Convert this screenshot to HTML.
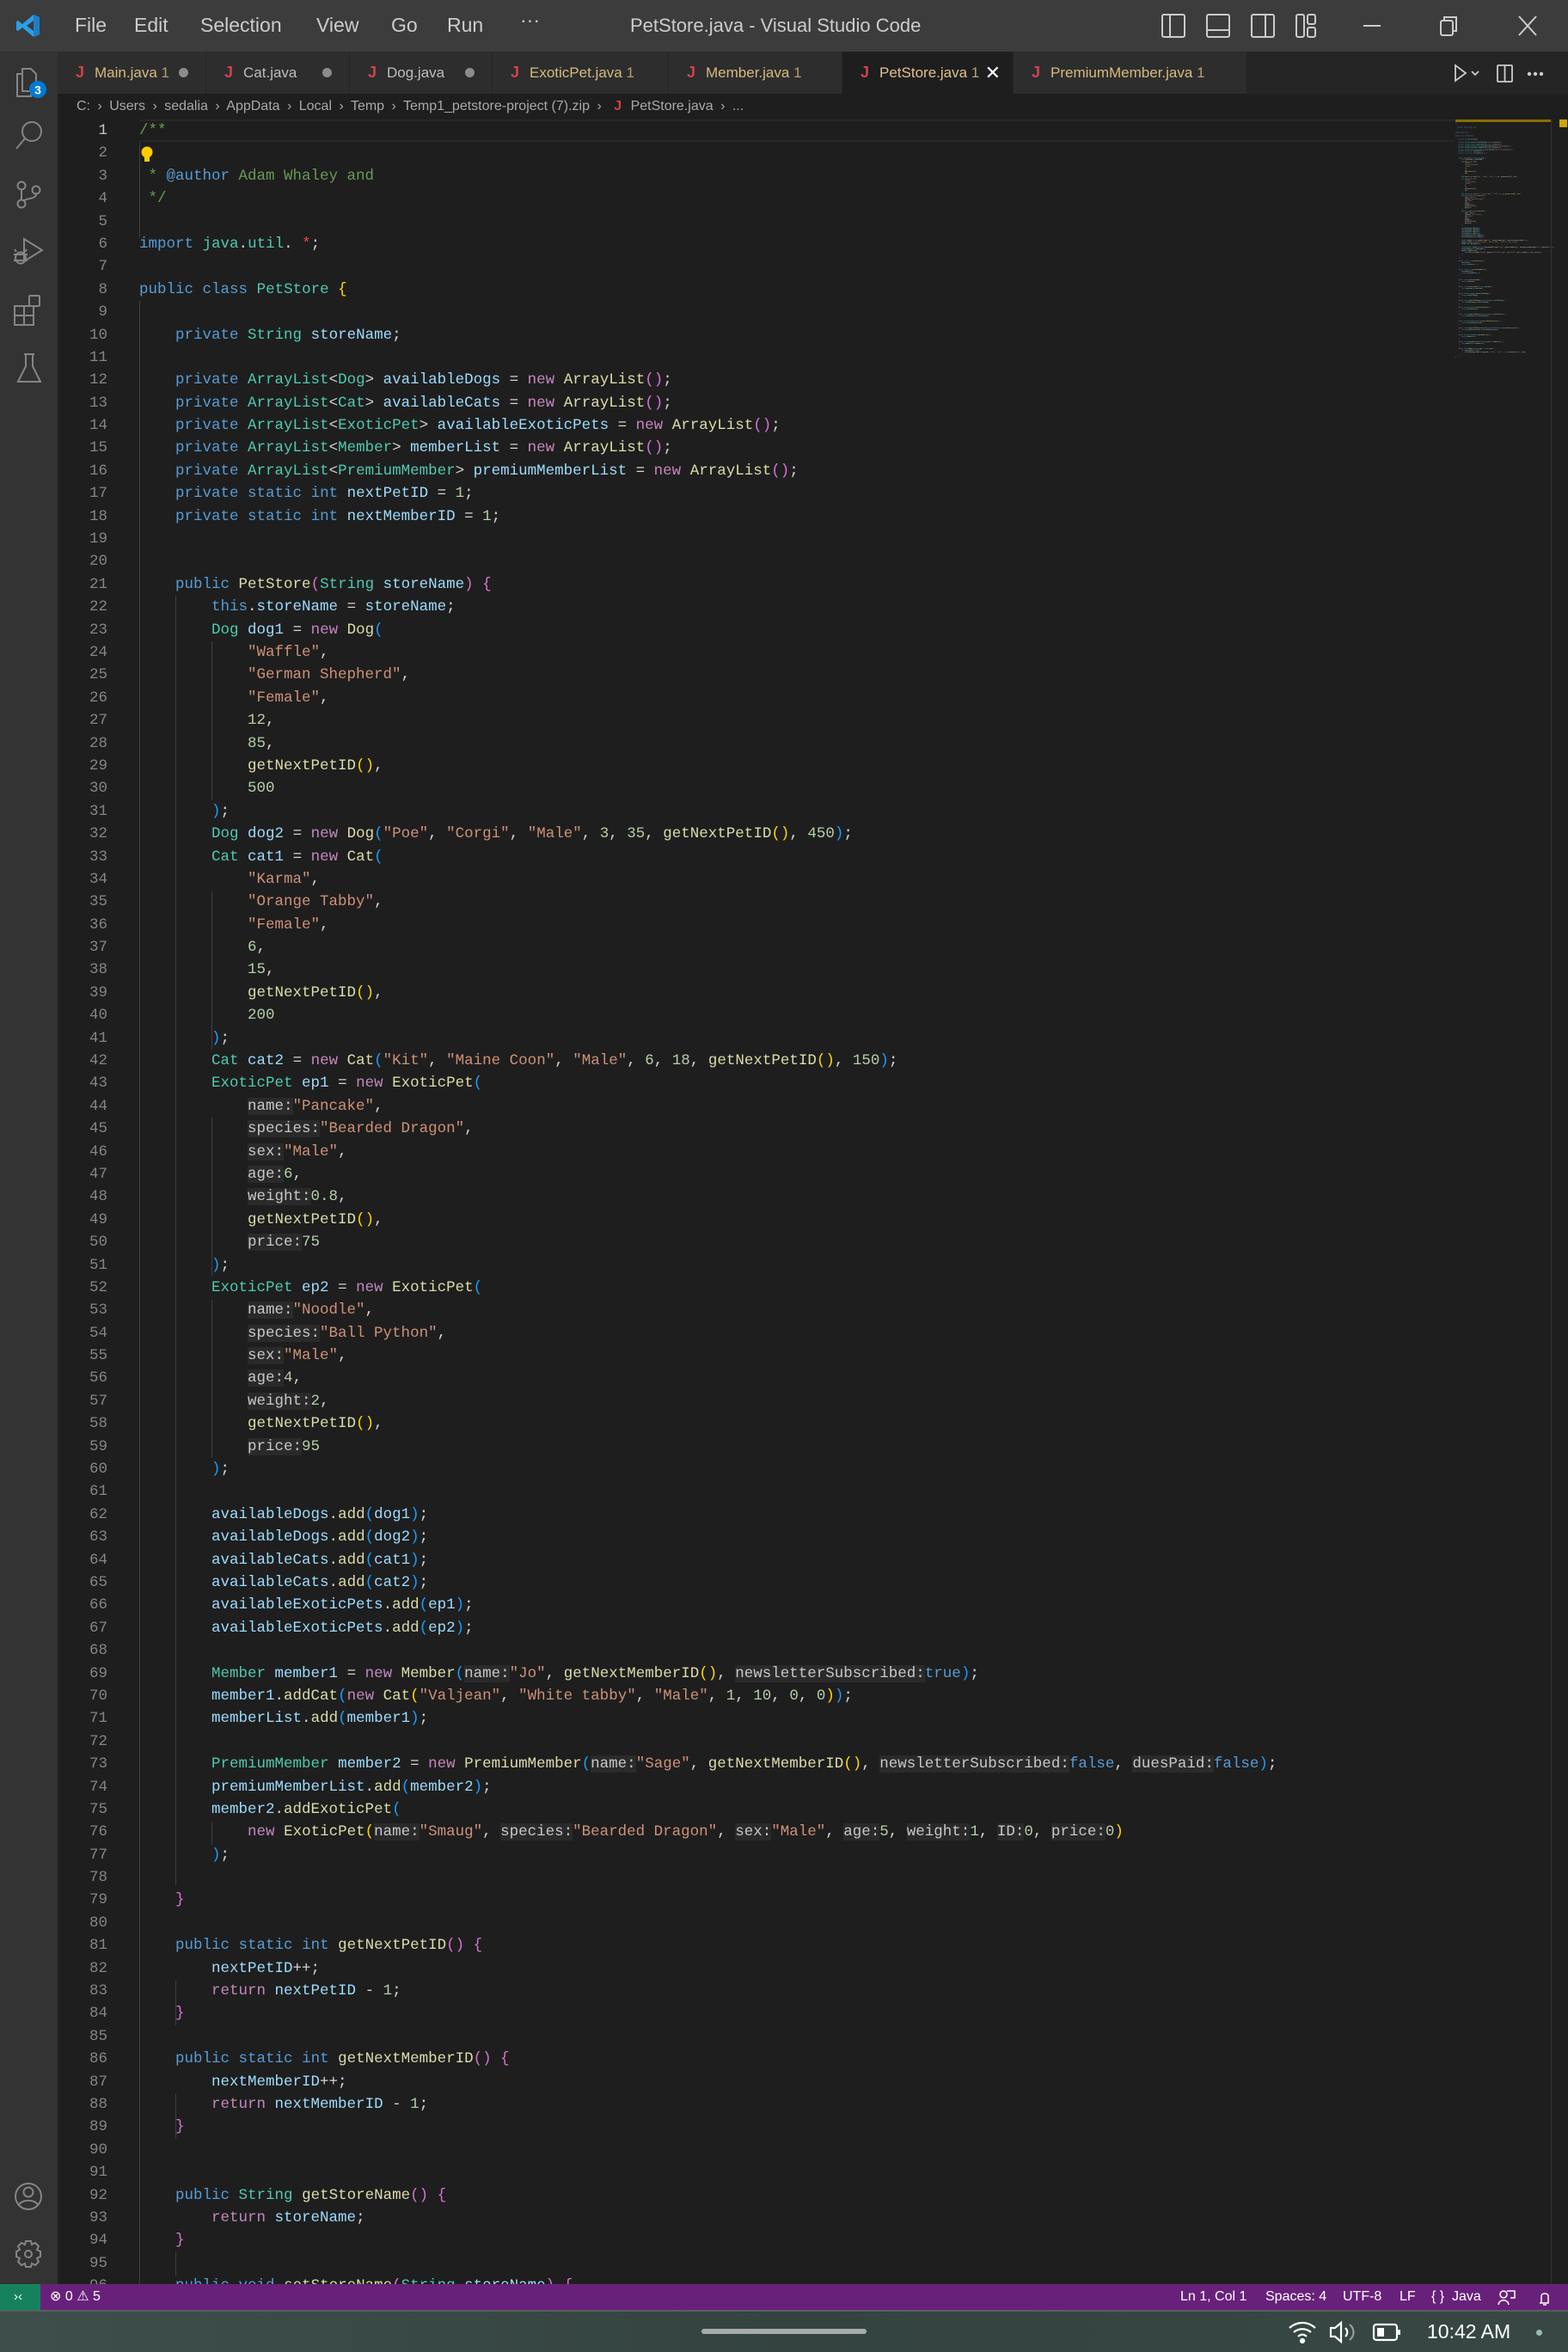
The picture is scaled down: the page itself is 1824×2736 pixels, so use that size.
<!DOCTYPE html>
<html><head><meta charset="utf-8"><style>
*{margin:0;padding:0;box-sizing:border-box}
body{width:1824px;height:2736px;background:#1e1e1e;overflow:hidden;position:relative;font-family:"Liberation Sans",sans-serif}
.abs{position:absolute}
#title{left:0;top:0;width:1824px;height:60px;background:#3c3c3c;color:#cccccc}
#title .m{position:absolute;top:16px;font-size:23px;color:#cccccc}
#tabs{left:67px;top:60px;width:1757px;height:49px;background:#252526}
.tab{position:absolute;top:0;height:49px;background:#2d2d2d;border-right:1px solid #252526;font-size:17px;line-height:49px;color:#d7ba7d;white-space:nowrap}
.tab .j{color:#d2414c;font-weight:bold;margin:0 12px 0 21px;font-size:18px}
.tab .dot{position:absolute;right:20px;top:19px;width:11px;height:11px;border-radius:50%;background:#8c8c8c}
#act{left:0;top:60px;width:67px;height:2597px;background:#333333}
#bc{left:67px;top:109px;width:1757px;height:30px;background:#1e1e1e;font-size:16px;color:#a9a9a9;line-height:30px;padding-left:22px;white-space:nowrap}
#ed{left:67px;top:139px;width:1757px;height:2518px;overflow:hidden;background:#1e1e1e}
#ln{position:absolute;left:0;top:0;width:58px;font-family:"Liberation Mono",monospace;font-size:17.5px;color:#858585;text-align:right}
#ln div,#code div{height:26.4px;line-height:26.4px}
#code{position:absolute;left:95px;top:0;font-family:"Liberation Mono",monospace;font-size:17.5px;color:#d4d4d4;white-space:normal}
#code div,#mm div{white-space:pre}
.c{color:#6a9955}.k{color:#569cd6}.p{color:#c586c0}.t{color:#4ec9b0}.v{color:#9cdcfe}.f{color:#dcdcaa}.s{color:#ce9178}.n{color:#b5cea8}
.y{color:#ffd700}.o{color:#da70d6}.b{color:#179fff}.r{color:#f44747}
.h{background:#2a2a2a;color:#c8c8c8}
.g{position:absolute;width:1px;background:#404040}
#mm{position:absolute;left:1626px;top:4px;transform-origin:0 0;transform:scale(0.087,0.0757);font-family:"Liberation Mono",monospace;font-size:17.5px;color:#d4d4d4;white-space:normal}
#mm div{height:26.4px;line-height:26.4px}
#status{left:0;top:2657px;width:1824px;height:30px;background:#68217a;color:#fff;font-size:16px;line-height:30px}
#status span{position:absolute;top:0}
#task{left:0;top:2687px;width:1824px;height:49px;background:linear-gradient(90deg,#3e4f4b,#34433f 50%,#384744);border-top:2px solid #5a5e5c}
</style></head><body>

<div id="title" class="abs">
<svg class="abs" style="left:18px;top:15px" width="30" height="30" viewBox="0 0 30 30"><path d="M21 2 L28 5 V25 L21 28 L8 17 L3 21 L1 20 V10 L3 9 L8 13 Z M21 9 L13 15 L21 21 Z" fill="#2b9fe8"/><path d="M21 2 L28 5 V25 L21 28 Z" fill="#1f7fc7"/></svg>
<span class="m" style="left:87px">File</span><span class="m" style="left:156px">Edit</span><span class="m" style="left:233px">Selection</span><span class="m" style="left:368px">View</span><span class="m" style="left:455px">Go</span><span class="m" style="left:520px">Run</span><span class="m" style="left:605px;top:10px">···</span>
<span class="abs" style="left:733px;top:17px;font-size:22px;color:#cccccc">PetStore.java - Visual Studio Code</span>
<svg class="abs" style="left:1350px;top:14px" width="440" height="32" fill="none" stroke="#cccccc" stroke-width="2">
<rect x="2" y="3" width="26" height="26" rx="2"/><line x1="11" y1="3" x2="11" y2="29"/>
<rect x="54" y="3" width="26" height="26" rx="2"/><line x1="54" y1="21" x2="80" y2="21"/>
<rect x="106" y="3" width="26" height="26" rx="2"/><line x1="122" y1="3" x2="122" y2="29"/>
<rect x="158" y="3" width="9" height="26" rx="2"/><rect x="171" y="3" width="9" height="11" rx="2"/><rect x="171" y="18" width="9" height="11" rx="2"/>
<line x1="236" y1="16" x2="256" y2="16"/>
<rect x="326" y="10" width="14" height="17" rx="2"/><path d="M330 10 V6 H344 V22 H340"/>
<path d="M417 5 L437 27 M437 5 L417 27"/>
</svg>
</div>

<div id="tabs" class="abs">
<div class="tab" style="left:0;width:173px"><span class="j">J</span>Main.java <span style="opacity:.8">1</span><span class="dot"></span></div>
<div class="tab" style="left:173px;width:167px;color:#bdbdbd"><span class="j">J</span>Cat.java<span class="dot"></span></div>
<div class="tab" style="left:340px;width:166px;color:#bdbdbd"><span class="j">J</span>Dog.java<span class="dot"></span></div>
<div class="tab" style="left:506px;width:205px"><span class="j">J</span>ExoticPet.java <span style="opacity:.8">1</span></div>
<div class="tab" style="left:711px;width:202px"><span class="j">J</span>Member.java <span style="opacity:.8">1</span></div>
<div class="tab" style="left:913px;width:199px;background:#1e1e1e;color:#e2c08d"><span class="j">J</span>PetStore.java <span style="opacity:.8">1</span><span style="position:absolute;right:14px;color:#fff;font-size:22px">✕</span></div>
<div class="tab" style="left:1112px;width:272px"><span class="j">J</span>PremiumMember.java <span style="opacity:.8">1</span></div>
<svg class="abs" style="left:1620px;top:12px" width="130" height="26" fill="none" stroke="#cccccc" stroke-width="1.8"><path d="M6 4 L18 13 L6 22 Z"/><path d="M25 11 L29 15 L33 11"/><rect x="55" y="4" width="17" height="19" rx="1"/><line x1="63.5" y1="4" x2="63.5" y2="23"/><circle cx="92" cy="14" r="1.3" fill="#ccc"/><circle cx="99" cy="14" r="1.3" fill="#ccc"/><circle cx="106" cy="14" r="1.3" fill="#ccc"/></svg>
</div>

<div id="act" class="abs">
<svg width="67" height="420" fill="none" stroke="#858585" stroke-width="2">
<path d="M26 20 H36 L42 26 V46 H26 Z"/><path d="M26 26 H20 V52 H36 V46"/>
<circle cx="44" cy="44" r="10" fill="#0078d4" stroke="none"/><text x="44" y="49.5" font-size="14" font-weight="bold" fill="#fff" stroke="none" text-anchor="middle" font-family="Liberation Sans">3</text>
<circle cx="37" cy="93" r="11"/><path d="M29 101 L19 113"/>
<circle cx="25" cy="156" r="4.5"/><circle cx="25" cy="177" r="4.5"/><circle cx="42" cy="161" r="4.5"/><path d="M25 160 V172 M42 166 C42 172 30 170 27 174"/>
<path d="M28 218 L49 231 L28 244 Z"/><ellipse cx="24" cy="240" rx="6" ry="6.5"/><path d="M16 236 H32 M16 243 H32 M19 233 L17 230 M29 233 L31 230"/>
<rect x="17" y="296" width="11" height="11"/><rect x="28" y="296" width="11" height="11"/><rect x="17" y="307" width="11" height="11"/><rect x="28" y="307" width="11" height="11"/><rect x="34" y="284" width="12" height="12" rx="1"/>
<path d="M28 352 H40 M30 352 V366 L21 384 H47 L38 366 V352"/>
</svg>
<svg class="abs" style="left:0;top:2470px" width="67" height="130" fill="none" stroke="#858585" stroke-width="2">
<circle cx="33" cy="25" r="15"/><circle cx="33" cy="20" r="5.5"/><path d="M22 35 C25 28 41 28 44 35"/>
<circle cx="33" cy="92" r="4"/><path d="M30 77 H36 L37 81 L41 79 L45 83 L43 87 L47 89 V95 L43 97 L45 101 L41 105 L37 103 L36 107 H30 L29 103 L25 105 L21 101 L23 97 L19 95 V89 L23 87 L21 83 L25 79 L29 81 Z"/>
</svg>
</div>

<div id="bc" class="abs">C: <span style="margin:0 4px">›</span> Users <span style="margin:0 4px">›</span> sedalia <span style="margin:0 4px">›</span> AppData <span style="margin:0 4px">›</span> Local <span style="margin:0 4px">›</span> Temp <span style="margin:0 4px">›</span> Temp1_petstore-project (7).zip <span style="margin:0 4px">›</span> <span style="color:#d2414c;font-weight:bold;margin:0 6px">J</span> PetStore.java <span style="margin:0 4px">›</span> ...</div>

<div id="ed" class="abs">
<div class="abs" style="left:95px;top:0;width:1530px;height:26.4px;border-top:2px solid #282828;border-bottom:2px solid #282828"></div>
<div class="g" style="left:95px;top:27px;height:110px"></div>
<div class="g" style="left:95px;top:211px;height:2400px"></div>
<div class="g" style="left:137px;top:554px;height:1500px"></div>
<div class="g" style="left:179px;top:607px;height:184px"></div>
<div class="g" style="left:179px;top:898px;height:184px"></div>
<div class="g" style="left:179px;top:1161px;height:184px"></div>
<div class="g" style="left:179px;top:1373px;height:184px"></div>
<div class="g" style="left:179px;top:1980px;height:27px"></div>
<div class="g" style="left:137px;top:2165px;height:52px"></div>
<div class="g" style="left:137px;top:2297px;height:52px"></div>
<div class="g" style="left:137px;top:2481px;height:27px"></div>
<svg class="abs" style="left:96px;top:30px" width="16" height="22"><circle cx="8" cy="8" r="6.5" fill="#ffcc00"/><rect x="5" y="13" width="6" height="6" fill="#ffcc00"/></svg>
<div id="ln"></div>
<div id="code"><div><span class="c">/**</span></div><div> </div><div><span class="c"> * </span><span class="k">@author</span><span class="c"> Adam Whaley and</span></div><div><span class="c"> */</span></div><div> </div><div><span class="k">import</span> <span class="t">java</span>.<span class="t">util</span>. <span class="r">*</span>;</div><div> </div><div><span class="k">public</span> <span class="k">class</span> <span class="t">PetStore</span> <span class="y">{</span></div><div> </div><div>    <span class="k">private</span> <span class="t">String</span> <span class="v">storeName</span>;</div><div> </div><div>    <span class="k">private</span> <span class="t">ArrayList</span>&lt;<span class="t">Dog</span>&gt; <span class="v">availableDogs</span> = <span class="p">new</span> <span class="f">ArrayList</span><span class="o">()</span>;</div><div>    <span class="k">private</span> <span class="t">ArrayList</span>&lt;<span class="t">Cat</span>&gt; <span class="v">availableCats</span> = <span class="p">new</span> <span class="f">ArrayList</span><span class="o">()</span>;</div><div>    <span class="k">private</span> <span class="t">ArrayList</span>&lt;<span class="t">ExoticPet</span>&gt; <span class="v">availableExoticPets</span> = <span class="p">new</span> <span class="f">ArrayList</span><span class="o">()</span>;</div><div>    <span class="k">private</span> <span class="t">ArrayList</span>&lt;<span class="t">Member</span>&gt; <span class="v">memberList</span> = <span class="p">new</span> <span class="f">ArrayList</span><span class="o">()</span>;</div><div>    <span class="k">private</span> <span class="t">ArrayList</span>&lt;<span class="t">PremiumMember</span>&gt; <span class="v">premiumMemberList</span> = <span class="p">new</span> <span class="f">ArrayList</span><span class="o">()</span>;</div><div>    <span class="k">private</span> <span class="k">static</span> <span class="k">int</span> <span class="v">nextPetID</span> = <span class="n">1</span>;</div><div>    <span class="k">private</span> <span class="k">static</span> <span class="k">int</span> <span class="v">nextMemberID</span> = <span class="n">1</span>;</div><div> </div><div> </div><div>    <span class="k">public</span> <span class="f">PetStore</span><span class="o">(</span><span class="t">String</span> <span class="v">storeName</span><span class="o">)</span> <span class="o">{</span></div><div>        <span class="k">this</span>.<span class="v">storeName</span> = <span class="v">storeName</span>;</div><div>        <span class="t">Dog</span> <span class="v">dog1</span> = <span class="p">new</span> <span class="f">Dog</span><span class="b">(</span></div><div>            <span class="s">"Waffle"</span>,</div><div>            <span class="s">"German Shepherd"</span>,</div><div>            <span class="s">"Female"</span>,</div><div>            <span class="n">12</span>,</div><div>            <span class="n">85</span>,</div><div>            <span class="f">getNextPetID</span><span class="y">()</span>,</div><div>            <span class="n">500</span></div><div>        <span class="b">)</span>;</div><div>        <span class="t">Dog</span> <span class="v">dog2</span> = <span class="p">new</span> <span class="f">Dog</span><span class="b">(</span><span class="s">"Poe"</span>, <span class="s">"Corgi"</span>, <span class="s">"Male"</span>, <span class="n">3</span>, <span class="n">35</span>, <span class="f">getNextPetID</span><span class="y">()</span>, <span class="n">450</span><span class="b">)</span>;</div><div>        <span class="t">Cat</span> <span class="v">cat1</span> = <span class="p">new</span> <span class="f">Cat</span><span class="b">(</span></div><div>            <span class="s">"Karma"</span>,</div><div>            <span class="s">"Orange Tabby"</span>,</div><div>            <span class="s">"Female"</span>,</div><div>            <span class="n">6</span>,</div><div>            <span class="n">15</span>,</div><div>            <span class="f">getNextPetID</span><span class="y">()</span>,</div><div>            <span class="n">200</span></div><div>        <span class="b">)</span>;</div><div>        <span class="t">Cat</span> <span class="v">cat2</span> = <span class="p">new</span> <span class="f">Cat</span><span class="b">(</span><span class="s">"Kit"</span>, <span class="s">"Maine Coon"</span>, <span class="s">"Male"</span>, <span class="n">6</span>, <span class="n">18</span>, <span class="f">getNextPetID</span><span class="y">()</span>, <span class="n">150</span><span class="b">)</span>;</div><div>        <span class="t">ExoticPet</span> <span class="v">ep1</span> = <span class="p">new</span> <span class="f">ExoticPet</span><span class="b">(</span></div><div>            <span class="h">name:</span><span class="s">"Pancake"</span>,</div><div>            <span class="h">species:</span><span class="s">"Bearded Dragon"</span>,</div><div>            <span class="h">sex:</span><span class="s">"Male"</span>,</div><div>            <span class="h">age:</span><span class="n">6</span>,</div><div>            <span class="h">weight:</span><span class="n">0.8</span>,</div><div>            <span class="f">getNextPetID</span><span class="y">()</span>,</div><div>            <span class="h">price:</span><span class="n">75</span></div><div>        <span class="b">)</span>;</div><div>        <span class="t">ExoticPet</span> <span class="v">ep2</span> = <span class="p">new</span> <span class="f">ExoticPet</span><span class="b">(</span></div><div>            <span class="h">name:</span><span class="s">"Noodle"</span>,</div><div>            <span class="h">species:</span><span class="s">"Ball Python"</span>,</div><div>            <span class="h">sex:</span><span class="s">"Male"</span>,</div><div>            <span class="h">age:</span><span class="n">4</span>,</div><div>            <span class="h">weight:</span><span class="n">2</span>,</div><div>            <span class="f">getNextPetID</span><span class="y">()</span>,</div><div>            <span class="h">price:</span><span class="n">95</span></div><div>        <span class="b">)</span>;</div><div> </div><div>        <span class="v">availableDogs</span>.<span class="f">add</span><span class="b">(</span><span class="v">dog1</span><span class="b">)</span>;</div><div>        <span class="v">availableDogs</span>.<span class="f">add</span><span class="b">(</span><span class="v">dog2</span><span class="b">)</span>;</div><div>        <span class="v">availableCats</span>.<span class="f">add</span><span class="b">(</span><span class="v">cat1</span><span class="b">)</span>;</div><div>        <span class="v">availableCats</span>.<span class="f">add</span><span class="b">(</span><span class="v">cat2</span><span class="b">)</span>;</div><div>        <span class="v">availableExoticPets</span>.<span class="f">add</span><span class="b">(</span><span class="v">ep1</span><span class="b">)</span>;</div><div>        <span class="v">availableExoticPets</span>.<span class="f">add</span><span class="b">(</span><span class="v">ep2</span><span class="b">)</span>;</div><div> </div><div>        <span class="t">Member</span> <span class="v">member1</span> = <span class="p">new</span> <span class="f">Member</span><span class="b">(</span><span class="h">name:</span><span class="s">"Jo"</span>, <span class="f">getNextMemberID</span><span class="y">()</span>, <span class="h">newsletterSubscribed:</span><span class="k">true</span><span class="b">)</span>;</div><div>        <span class="v">member1</span>.<span class="f">addCat</span><span class="b">(</span><span class="p">new</span> <span class="f">Cat</span><span class="y">(</span><span class="s">"Valjean"</span>, <span class="s">"White tabby"</span>, <span class="s">"Male"</span>, <span class="n">1</span>, <span class="n">10</span>, <span class="n">0</span>, <span class="n">0</span><span class="y">)</span><span class="b">)</span>;</div><div>        <span class="v">memberList</span>.<span class="f">add</span><span class="b">(</span><span class="v">member1</span><span class="b">)</span>;</div><div> </div><div>        <span class="t">PremiumMember</span> <span class="v">member2</span> = <span class="p">new</span> <span class="f">PremiumMember</span><span class="b">(</span><span class="h">name:</span><span class="s">"Sage"</span>, <span class="f">getNextMemberID</span><span class="y">()</span>, <span class="h">newsletterSubscribed:</span><span class="k">false</span>, <span class="h">duesPaid:</span><span class="k">false</span><span class="b">)</span>;</div><div>        <span class="v">premiumMemberList</span>.<span class="f">add</span><span class="b">(</span><span class="v">member2</span><span class="b">)</span>;</div><div>        <span class="v">member2</span>.<span class="f">addExoticPet</span><span class="b">(</span></div><div>            <span class="p">new</span> <span class="f">ExoticPet</span><span class="y">(</span><span class="h">name:</span><span class="s">"Smaug"</span>, <span class="h">species:</span><span class="s">"Bearded Dragon"</span>, <span class="h">sex:</span><span class="s">"Male"</span>, <span class="h">age:</span><span class="n">5</span>, <span class="h">weight:</span><span class="n">1</span>, <span class="h">ID:</span><span class="n">0</span>, <span class="h">price:</span><span class="n">0</span><span class="y">)</span></div><div>        <span class="b">)</span>;</div><div> </div><div>    <span class="o">}</span></div><div> </div><div>    <span class="k">public</span> <span class="k">static</span> <span class="k">int</span> <span class="f">getNextPetID</span><span class="o">()</span> <span class="o">{</span></div><div>        <span class="v">nextPetID</span>++;</div><div>        <span class="p">return</span> <span class="v">nextPetID</span> - <span class="n">1</span>;</div><div>    <span class="o">}</span></div><div> </div><div>    <span class="k">public</span> <span class="k">static</span> <span class="k">int</span> <span class="f">getNextMemberID</span><span class="o">()</span> <span class="o">{</span></div><div>        <span class="v">nextMemberID</span>++;</div><div>        <span class="p">return</span> <span class="v">nextMemberID</span> - <span class="n">1</span>;</div><div>    <span class="o">}</span></div><div> </div><div> </div><div>    <span class="k">public</span> <span class="t">String</span> <span class="f">getStoreName</span><span class="o">()</span> <span class="o">{</span></div><div>        <span class="p">return</span> <span class="v">storeName</span>;</div><div>    <span class="o">}</span></div><div> </div><div>    <span class="k">public</span> <span class="k">void</span> <span class="f">setStoreName</span><span class="o">(</span><span class="t">String</span> <span class="v">storeName</span><span class="o">)</span> <span class="o">{</span></div><div>        <span class="k">this</span>.<span class="v">storeName</span> = <span class="v">storeName</span>;</div><div>    <span class="o">}</span></div><div> </div><div>    <span class="k">public</span> <span class="t">ArrayList</span>&lt;<span class="t">Dog</span>&gt; <span class="f">getAvailableDogs</span><span class="o">()</span> <span class="o">{</span></div><div>        <span class="p">return</span> <span class="v">availableDogs</span>;</div><div>    <span class="o">}</span></div><div> </div><div>    <span class="k">public</span> <span class="k">void</span> <span class="f">setAvailableDogs</span><span class="o">(</span><span class="t">ArrayList</span>&lt;<span class="t">Dog</span>&gt; <span class="v">availableDogs</span><span class="o">)</span> <span class="o">{</span></div><div>        <span class="k">this</span>.<span class="v">availableDogs</span> = <span class="v">availableDogs</span>;</div><div>    <span class="o">}</span></div><div> </div><div>    <span class="k">public</span> <span class="t">ArrayList</span>&lt;<span class="t">Cat</span>&gt; <span class="f">getAvailableCats</span><span class="o">()</span> <span class="o">{</span></div><div>        <span class="p">return</span> <span class="v">availableCats</span>;</div><div>    <span class="o">}</span></div><div> </div><div>    <span class="k">public</span> <span class="k">void</span> <span class="f">setAvailableCats</span><span class="o">(</span><span class="t">ArrayList</span>&lt;<span class="t">Cat</span>&gt; <span class="v">availableCats</span><span class="o">)</span> <span class="o">{</span></div><div>        <span class="k">this</span>.<span class="v">availableCats</span> = <span class="v">availableCats</span>;</div><div>    <span class="o">}</span></div><div> </div><div>    <span class="k">public</span> <span class="t">ArrayList</span>&lt;<span class="t">ExoticPet</span>&gt; <span class="f">getAvailableExoticPets</span><span class="o">()</span> <span class="o">{</span></div><div>        <span class="p">return</span> <span class="v">availableExoticPets</span>;</div><div>    <span class="o">}</span></div><div> </div><div>    <span class="k">public</span> <span class="k">void</span> <span class="f">setAvailableExoticPets</span><span class="o">(</span><span class="t">ArrayList</span>&lt;<span class="t">ExoticPet</span>&gt; <span class="v">availableExoticPets</span><span class="o">)</span> <span class="o">{</span></div><div>        <span class="k">this</span>.<span class="v">availableExoticPets</span> = <span class="v">availableExoticPets</span>;</div><div>    <span class="o">}</span></div><div> </div><div>    <span class="k">public</span> <span class="t">ArrayList</span>&lt;<span class="t">Member</span>&gt; <span class="f">getMemberList</span><span class="o">()</span> <span class="o">{</span></div><div>        <span class="p">return</span> <span class="v">memberList</span>;</div><div>    <span class="o">}</span></div><div> </div><div>    <span class="k">public</span> <span class="k">void</span> <span class="f">setMemberList</span><span class="o">(</span><span class="t">ArrayList</span>&lt;<span class="t">Member</span>&gt; <span class="v">memberList</span><span class="o">)</span> <span class="o">{</span></div><div>        <span class="k">this</span>.<span class="v">memberList</span> = <span class="v">memberList</span>;</div><div>    <span class="o">}</span></div><div> </div><div>    <span class="k">public</span> <span class="k">void</span> <span class="f">addPet</span><span class="o">(</span><span class="t">String</span> <span class="v">type</span>, <span class="t">String</span> <span class="v">name</span><span class="o">)</span> <span class="o">{</span></div><div>        <span class="p">if</span> <span class="b">(</span><span class="v">type</span>.<span class="f">equals</span><span class="y">(</span><span class="s">"Dog"</span><span class="y">)</span><span class="b">)</span> <span class="b">{</span></div><div>            <span class="v">availableDogs</span>.<span class="f">add</span><span class="y">(</span><span class="p">new</span> <span class="f">Dog</span><span class="o">(</span><span class="v">name</span>, <span class="s">"Mixed"</span>, <span class="s">"Male"</span>, <span class="n">1</span>, <span class="n">10</span>, <span class="f">getNextPetID</span><span class="b">()</span>, <span class="n">100</span><span class="o">)</span><span class="y">)</span>;</div><div>        <span class="b">}</span></div><div>    <span class="o">}</span></div><div><span class="y">}</span></div></div>
<div id="mm"></div>
<div class="abs" style="left:1626px;top:0;width:111px;height:3px;background:#8a6d00"></div>
<div class="abs" style="left:1737px;top:0;width:1px;height:2518px;background:#333"></div>
<div class="abs" style="left:1747px;top:0;width:9px;height:9px;background:#cca700"></div>
</div>

<div id="status" class="abs">
<div class="abs" style="left:0;top:0;width:47px;height:30px;background:#16825d"></div>
<span style="left:16px;font-size:15px">›‹</span>
<span style="left:58px">⊗ 0 ⚠ 5</span>
<span style="left:1373px">Ln 1, Col 1</span>
<span style="left:1472px">Spaces: 4</span>
<span style="left:1562px">UTF-8</span>
<span style="left:1628px">LF</span>
<span style="left:1665px">{ }&nbsp; Java</span>
<svg class="abs" style="left:1741px;top:5px" width="70" height="20" fill="none" stroke="#fff" stroke-width="1.5"><circle cx="8" cy="7" r="4"/><path d="M2 19 C3 12 13 12 14 19 M12 3 H21 V11 H16"/><path d="M52 17 V9 C52 5 60 5 60 9 V17 H50 M54 19 H58"/></svg>
</div>

<div id="task" class="abs">
<div class="abs" style="left:816px;top:20px;width:192px;height:6px;border-radius:3px;background:#a7acaa"></div>
<svg class="abs" style="left:1498px;top:8px" width="140" height="32" fill="none" stroke="#fff" stroke-width="2.2"><path d="M2 11 C11 3 23 3 32 11 M7 16 C13 11 21 11 27 16 M12 21 C15 18 19 18 22 21"/><circle cx="17" cy="26" r="2" fill="#fff"/><path d="M50 11 H55 L62 5 V27 L55 21 H50 Z M67 11 C70 14 70 18 67 21"/><path d="M72 7 C78 12 78 20 72 25" stroke="#999"/><rect x="100" y="7" width="27" height="18" rx="3"/><rect x="104" y="11" width="8" height="10" fill="#fff" stroke="none"/><rect x="128" y="13" width="3" height="6" fill="#fff" stroke="none"/></svg>
<span class="abs" style="left:1660px;top:10px;font-size:23px;color:#fff">10:42 AM</span>
<div class="abs" style="left:1787px;top:21px;width:7px;height:7px;border-radius:50%;background:#9ab8b0"></div>
</div>

<script>
var ln=document.getElementById('ln'),h='';
for(var i=1;i<=96;i++){h+='<div'+(i==1?' style="color:#c6c6c6"':'')+'>'+i+'</div>';}
ln.innerHTML=h;
document.getElementById('mm').innerHTML=document.getElementById('code').innerHTML;
</script>
</body></html>
